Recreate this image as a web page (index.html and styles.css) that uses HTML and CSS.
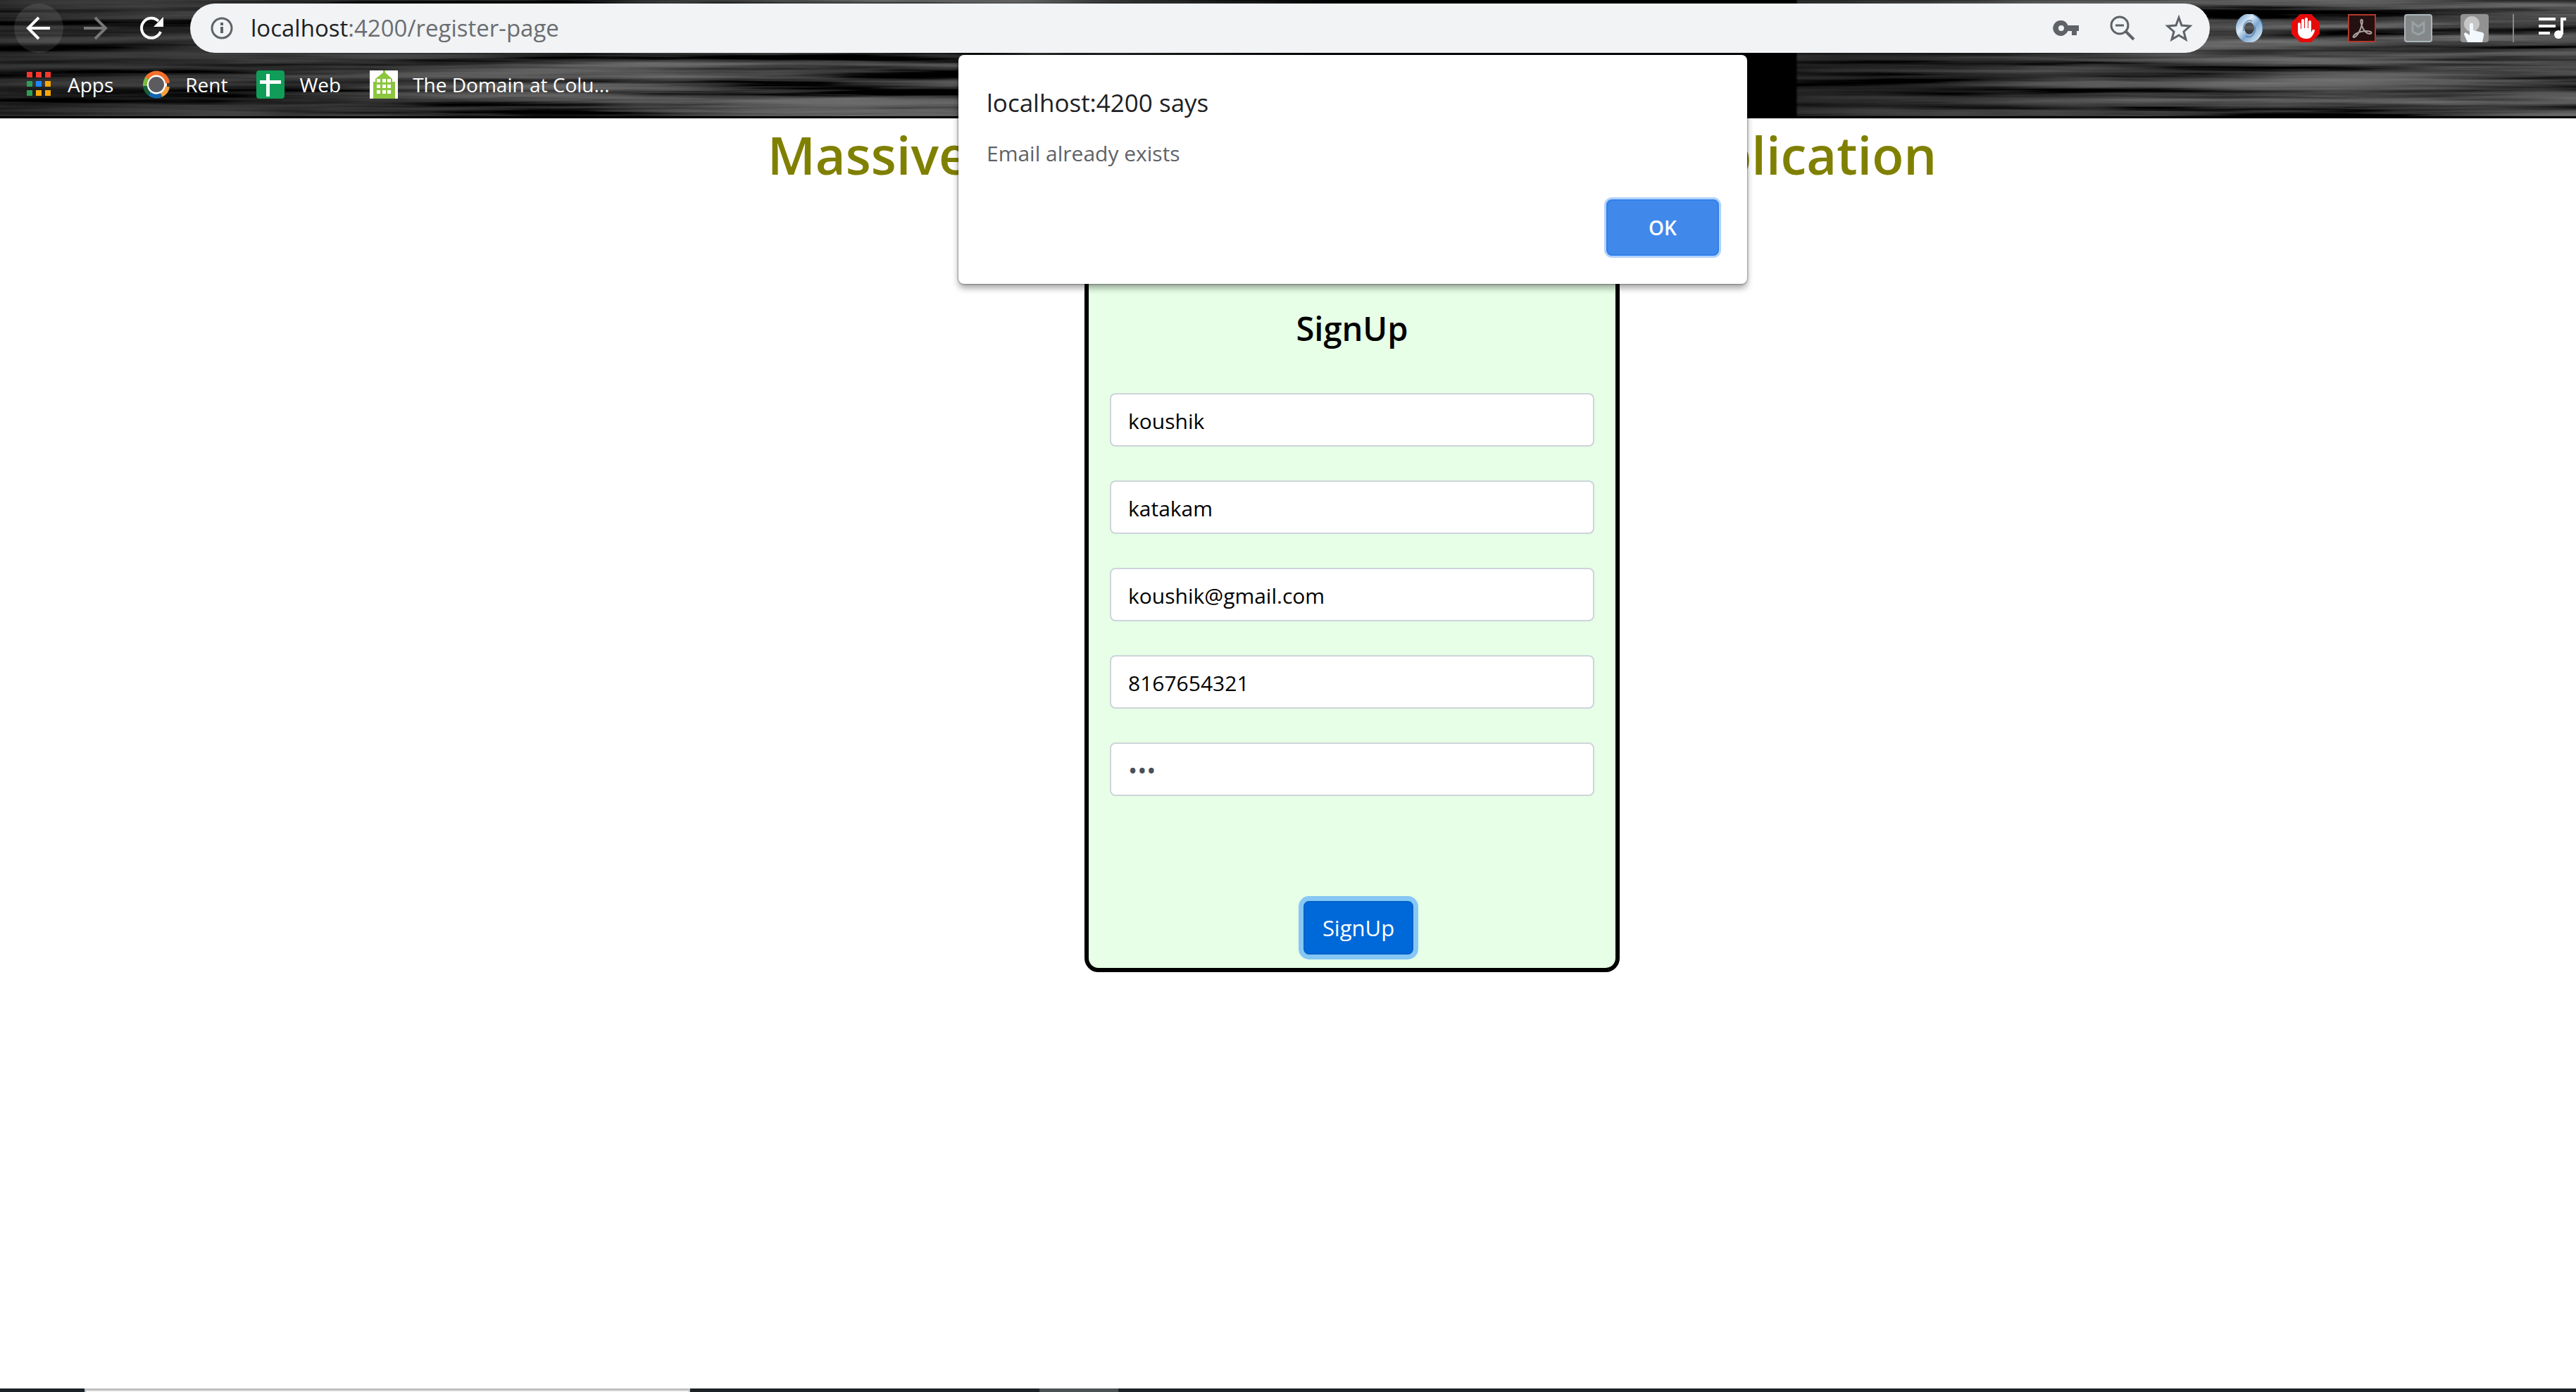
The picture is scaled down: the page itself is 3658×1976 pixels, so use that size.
FILE: index.html
```
<!DOCTYPE html>
<html lang="en">
<head>
<meta charset="utf-8">
<meta name="viewport" content="width=device-width, initial-scale=1">
<title>Register</title>
<link rel="stylesheet" href="styles.css">
</head>
<body>
<header class="browser">
  <svg class="wood" aria-hidden="true" preserveAspectRatio="none">
    <defs>
      <filter id="grain" x="0" y="0" width="100%" height="100%" color-interpolation-filters="sRGB">
        <feTurbulence type="fractalNoise" baseFrequency="0.002 0.08" numOctaves="4" seed="11"/>
        <feColorMatrix values="1.1 0 0 0 -0.29  1.1 0 0 0 -0.29  1.1 0 0 0 -0.29  0 0 0 0 1"/>
        <feComponentTransfer>
          <feFuncR type="table" tableValues="0 .16 .25 .34 .4 .44 .46 .48 .5"/>
          <feFuncG type="table" tableValues="0 .16 .25 .34 .4 .44 .46 .48 .5"/>
          <feFuncB type="table" tableValues="0 .16 .25 .34 .4 .44 .46 .48 .5"/>
        </feComponentTransfer>
      </filter>
      <linearGradient id="shade">
        <stop offset="0" stop-color="#000" stop-opacity=".5"/>
        <stop offset=".25" stop-color="#000" stop-opacity="0"/>
        <stop offset=".4" stop-color="#000" stop-opacity="0"/>
        <stop offset=".52" stop-color="#000"/>
        <stop offset=".697" stop-color="#000"/>
        <stop offset=".698" stop-color="#000" stop-opacity=".5"/>
        <stop offset=".85" stop-color="#000" stop-opacity="0"/>
      </linearGradient>
    </defs>
    <rect width="100%" height="100%" filter="url(#grain)"/>
    <rect width="100%" height="100%" fill="url(#shade)"/>
    <rect y="165" width="100%" height="3"/>
  </svg>
  <div class="toolbar">
    <nav class="nav-buttons" aria-label="Navigation">
      <button class="nav-button nav-button-active" type="button" aria-label="Back"><svg viewBox="0 0 36 36" fill="none" stroke="#fff" stroke-width="4"><path d="M34 18H4M18 3 3 18l15 15"/></svg></button>
      <button class="nav-button" type="button" aria-label="Forward"><svg viewBox="0 0 36 36" fill="none" stroke="#777" stroke-width="4"><path d="M2 18h30M18 3l15 15-15 15"/></svg></button>
      <button class="nav-button" type="button" aria-label="Reload"><svg viewBox="0 0 36 36" fill="none" stroke="#fff" stroke-width="4"><path d="M31 23a14 14 0 1 1-3-15"/><path d="M35 2v14H21z" fill="#fff" stroke="none"/></svg></button>
    </nav>
    <div class="address">
      <svg class="info" viewBox="0 0 34 34" fill="none" stroke="#5f6368" stroke-width="3"><circle cx="17" cy="17" r="14"/><path d="M17 15v9M17 9v4" stroke-width="4"/></svg>
      <p class="url"><span class="host">localhost</span>:4200/register-page</p>
      <div class="address-icons">
        <svg viewBox="0 0 40 40" fill="#5f6368"><path fill-rule="evenodd" d="M13 9a11 11 0 1 0 9.500 15H28v6h7v-6h3v-8H22.500A11 11 0 0 0 13 9zm0 7a4 4 0 1 1 0 8 4 4 0 0 1 0-8z"/></svg>
        <svg viewBox="0 0 40 40" fill="none" stroke="#5f6368" stroke-width="3"><circle cx="16" cy="16" r="12"/><path d="M10 16h12"/><path d="m25 25 11 11" stroke-width="4"/></svg>
        <svg viewBox="0 0 40 40" fill="none" stroke="#5f6368" stroke-width="3"><path d="m20 5 4 11 12 1-9 8 3 11-10-6-10 6 3-11-9-8 12-1z"/></svg>
      </div>
    </div>
    <div class="extensions">
      <svg viewBox="0 0 40 40"><defs><linearGradient id="ring" x2="1" y2="1"><stop stop-color="#8fb4d8"/><stop offset=".3" stop-color="#dcebf8"/><stop offset=".6" stop-color="#7fa8d0"/><stop offset="1" stop-color="#c6dcef"/></linearGradient></defs><ellipse cx="20" cy="20" rx="13" ry="14.500" fill="none" stroke="url(#ring)" stroke-width="12"/><path d="M12 24a9 12 0 0 1 12-14M26 1c9 3 15 12 13 22M28 18a9 12 0 0 1-13 13" fill="none" stroke="#3e6d9e" stroke-width="2" opacity=".6"/></svg>
      <svg viewBox="0 0 40 40"><path d="M12 0h16l12 12v16L28 40H12L0 28V12z" fill="#e60b0b"/><path d="M11 14a2 2 0 0 1 4 0v7h1V9a2 2 0 0 1 4 0v11h1V7a2 2 0 0 1 4 0v13h1V11a2 2 0 0 1 4 0v15l2-4a2 2 0 0 1 3 2c-3 8-6 11-12 11-7 0-12-4-12-11z" transform="translate(-2 0)" fill="#fff"/></svg>
      <svg viewBox="0 0 40 40"><rect x="1" y="1" width="38" height="38" fill="#241010" stroke="#b3382c" stroke-width="2"/><path d="M19 8c4-1 1 10-4 19-4 7-9 7-7 4 3-5 17-9 24-6 4 2-1 5-6 1-6-5-9-17-7-18z" fill="none" stroke="#a9a0a0" stroke-width="2"/></svg>
      <svg viewBox="0 0 40 40"><rect x="1" y="1" width="38" height="38" rx="3" fill="#858888" stroke="#abb6bd" stroke-width="2"/><path d="M12 12v13l8 4 8-4V12l-8 6z" fill="none" stroke="#98a2a6" stroke-width="3"/></svg>
      <svg viewBox="0 0 40 40"><rect width="40" height="40" rx="4" fill="#929292"/><circle cx="16" cy="14" r="11" fill="#c6c6c6"/><path d="M13 14a3 3 0 0 1 5 0v9l13 3q3 1 2 5l-2 9H10L5 29q0-4 4-2l4 3z" fill="#f3f8fd"/></svg>
      <span class="divider"></span>
      <svg viewBox="0 0 40 40" fill="none" stroke="#fff" stroke-width="4"><path d="M1 7h24M1 17h24M1 27h16M34 29V7h6"/><circle cx="29" cy="29" r="6" fill="#fff" stroke="none"/></svg>
    </div>
  </div>
  <nav class="bookmarks" aria-label="Bookmarks">
    <a href="#"><svg viewBox="0 0 40 40"><path d="M3 2h8v8H3zM16 2h8v8h-8zM29 2h8v8h-8z" fill="#f4362e"/><path d="M3 15h8v8H3zM3 28h8v8H3z" fill="#2e9e58"/><path d="M16 15h8v8h-8z" fill="#1e88f5"/><path d="M29 15h8v8h-8zM16 28h8v8h-8zM29 28h8v8h-8z" fill="#f9a60a"/></svg>Apps</a>
    <a href="#"><svg viewBox="0 0 40 40" fill="none" stroke-width="6"><circle cx="20" cy="20" r="13" fill="#5c5c60" stroke="#fff" stroke-width="4"/><path d="M6 12A16 16 0 0 1 36 18" stroke="#f26f2c"/><path d="M36 23a16 16 0 0 1-9 12" stroke="#f5a03c"/><path d="M27 35a16 16 0 0 1-17-2" stroke="#1265ad"/><path d="M10 33A16 16 0 0 1 4 22" stroke="#17603a"/><path d="M4 22a16 16 0 0 1 3-11" stroke="#7cbb42"/></svg>Rent</a>
    <a href="#"><svg viewBox="0 0 40 40"><rect width="40" height="40" rx="4" fill="#109d58"/><path d="M14 5h5v9h16v5H19v18h-5V19H5v-5h9z" fill="#fff"/></svg>Web</a>
    <a href="#"><svg viewBox="0 0 40 40"><path d="M0 0h40v40H0z" fill="#fff"/><path d="M19 0h3v3l10 9v4h4v24H5V16h3v-4l11-9z" fill="#8cc63e"/><path d="M10 12h5v5h-5zM18 12h5v5h-5zM25 12h5v5h-5zM10 20h5v5h-5zM18 20h5v5h-5zM25 20h5v5h-5zM10 28h5v5h-5zM18 28h5v5h-5zM25 28h5v5h-5z" fill="#fff"/></svg>The Domain at Colu...</a>
  </nav>
</header>

<main class="page">
  <h1>Massive Open Online Courses Web Application</h1>
  <form class="card">
    <h2>SignUp</h2>
    <input class="field" type="text" aria-label="First name" value="koushik">
    <input class="field" type="text" aria-label="Last name" value="katakam">
    <input class="field" type="email" aria-label="Email" value="koushik@gmail.com">
    <input class="field" type="tel" aria-label="Phone number" value="8167654321">
    <input class="field field-password" type="password" aria-label="Password" value="abc">
    <button class="submit" type="button">SignUp</button>
  </form>
</main>

<section class="dialog" role="alertdialog" aria-labelledby="dialog-title" aria-describedby="dialog-text">
  <h2 id="dialog-title">localhost:4200 says</h2>
  <p id="dialog-text">Email already exists</p>
  <button class="ok" type="button">OK</button>
</section>

<footer class="taskbar"><span class="task-search"></span><span class="task-active"></span></footer>
</body>
</html>
```
FILE: styles.css
```
* {
  box-sizing: border-box;
}

body {
  display: flex;
  flex-direction: column;
  min-height: 100vh;
  margin: 0;
  background: #fff;
  color: #000;
  font-family: "Open Sans", "Noto Sans", sans-serif;
  font-size: 32px;
}

h1,
h2,
p {
  margin: 0;
}

svg {
  display: block;
  flex: none;
}

button,
input {
  font: inherit;
}

.browser {
  position: relative;
  display: flex;
  flex-direction: column;
  height: 168px;
  padding-top: 5px;
  background: #000;
  overflow: hidden;
}

.wood {
  position: absolute;
  inset: 0;
  width: 100%;
  height: 100%;
}

.toolbar {
  position: relative;
  display: flex;
  align-items: center;
  height: 70px;
  padding: 0 14px 0 20px;
}

.nav-buttons {
  display: flex;
  gap: 10px;
  margin-right: 20px;
}

.nav-button {
  display: flex;
  align-items: center;
  justify-content: center;
  width: 70px;
  height: 70px;
  padding: 0;
  border: 0;
  border-radius: 50%;
  background: transparent;
}

.nav-button-active {
  background: rgba(255, 255, 255, 0.1);
}

.nav-button svg {
  width: 36px;
  height: 36px;
}

.address {
  display: flex;
  flex: 1;
  align-items: center;
  height: 70px;
  padding: 0 24px 0 28px;
  border-radius: 35px;
  background: #f1f3f4;
}

.info {
  width: 34px;
  height: 34px;
}

.url {
  flex: 1;
  padding-left: 24px;
  color: #6a6d71;
  font-size: 33px;
  line-height: 70px;
}

.host {
  color: #202124;
}

.address-icons,
.extensions {
  display: flex;
  align-items: center;
  gap: 40px;
}

.address-icons svg,
.extensions svg {
  width: 40px;
  height: 40px;
}

.extensions {
  margin-left: 36px;
}

.divider {
  width: 2px;
  height: 40px;
  margin-right: -6px;
  margin-left: -6px;
  background: #888;
}

.bookmarks {
  position: relative;
  display: flex;
  align-items: center;
  gap: 41px;
  height: 90px;
  padding: 0 35px;
}

.bookmarks a {
  display: flex;
  align-items: center;
  gap: 21px;
  color: #fff;
  font-size: 28px;
  line-height: 40px;
  text-decoration: none;
}

.bookmarks svg {
  width: 40px;
  height: 40px;
}

.page {
  display: flex;
  flex: 1;
  flex-direction: column;
  align-items: center;
  padding-left: 182px;
}

h1 {
  padding-top: 4px;
  color: #808000;
  font-size: 74px;
  font-weight: 600;
  line-height: 96px;
  white-space: nowrap;
}

.card {
  display: flex;
  flex-direction: column;
  gap: 48px;
  width: 760px;
  margin-top: 52px;
  padding: 104px 30px 19px;
  border: 6px solid #000;
  border-radius: 20px;
  background: #e6ffe6;
}

.card h2 {
  padding-bottom: 8px;
  font-size: 47px;
  font-weight: 600;
  line-height: 72px;
  text-align: center;
}

.field {
  width: 100%;
  height: 76px;
  padding: 8px 24px 6px;
  border: 2px solid #ced4da;
  border-radius: 8px;
  background: #fff;
  color: #000;
  font-size: 30px;
}

.field-password {
  color: #495057;
  font-size: 35px;
}

.submit {
  align-self: center;
  height: 76px;
  margin: 101px 0 0 18px;
  padding: 0 25px;
  border: 2px solid #0062cc;
  border-radius: 8px;
  background: #0069d9;
  box-shadow: 0 0 0 7px #87c7f5;
  color: #fff;
  font-size: 31px;
}

.dialog {
  position: absolute;
  top: 78px;
  left: calc(50% + 92px);
  display: flex;
  flex-direction: column;
  width: 1120px;
  margin-left: -560px;
  padding: 43px 40px 40px;
  border-radius: 8px;
  background: #fff;
  box-shadow: 0 0 2px 1px rgba(0, 0, 0, 0.3), 0 6px 10px rgba(0, 0, 0, 0.35);
}

.dialog h2 {
  color: #202124;
  font-size: 35px;
  font-weight: 400;
  line-height: 50px;
}

.dialog p {
  margin-top: 25px;
  color: #5f6368;
  font-size: 30px;
  line-height: 44px;
}

.ok {
  align-self: flex-end;
  width: 160px;
  height: 80px;
  margin-top: 43px;
  border: 2px solid #3080ec;
  border-radius: 8px;
  background: #4089eb;
  box-shadow: 0 0 0 3px #b5d3f9;
  color: #fff;
  font-size: 28px;
  font-weight: 600;
}

.taskbar {
  display: flex;
  height: 5px;
  background: #1c2226;
}

.task-search {
  width: 860px;
  margin-left: 120px;
  border: solid #bfbfbf;
  border-width: 3px 2px 0;
  background: #f2f2f2;
}

.task-active {
  width: 112px;
  margin-left: 496px;
  background: #4a5053;
}
```
